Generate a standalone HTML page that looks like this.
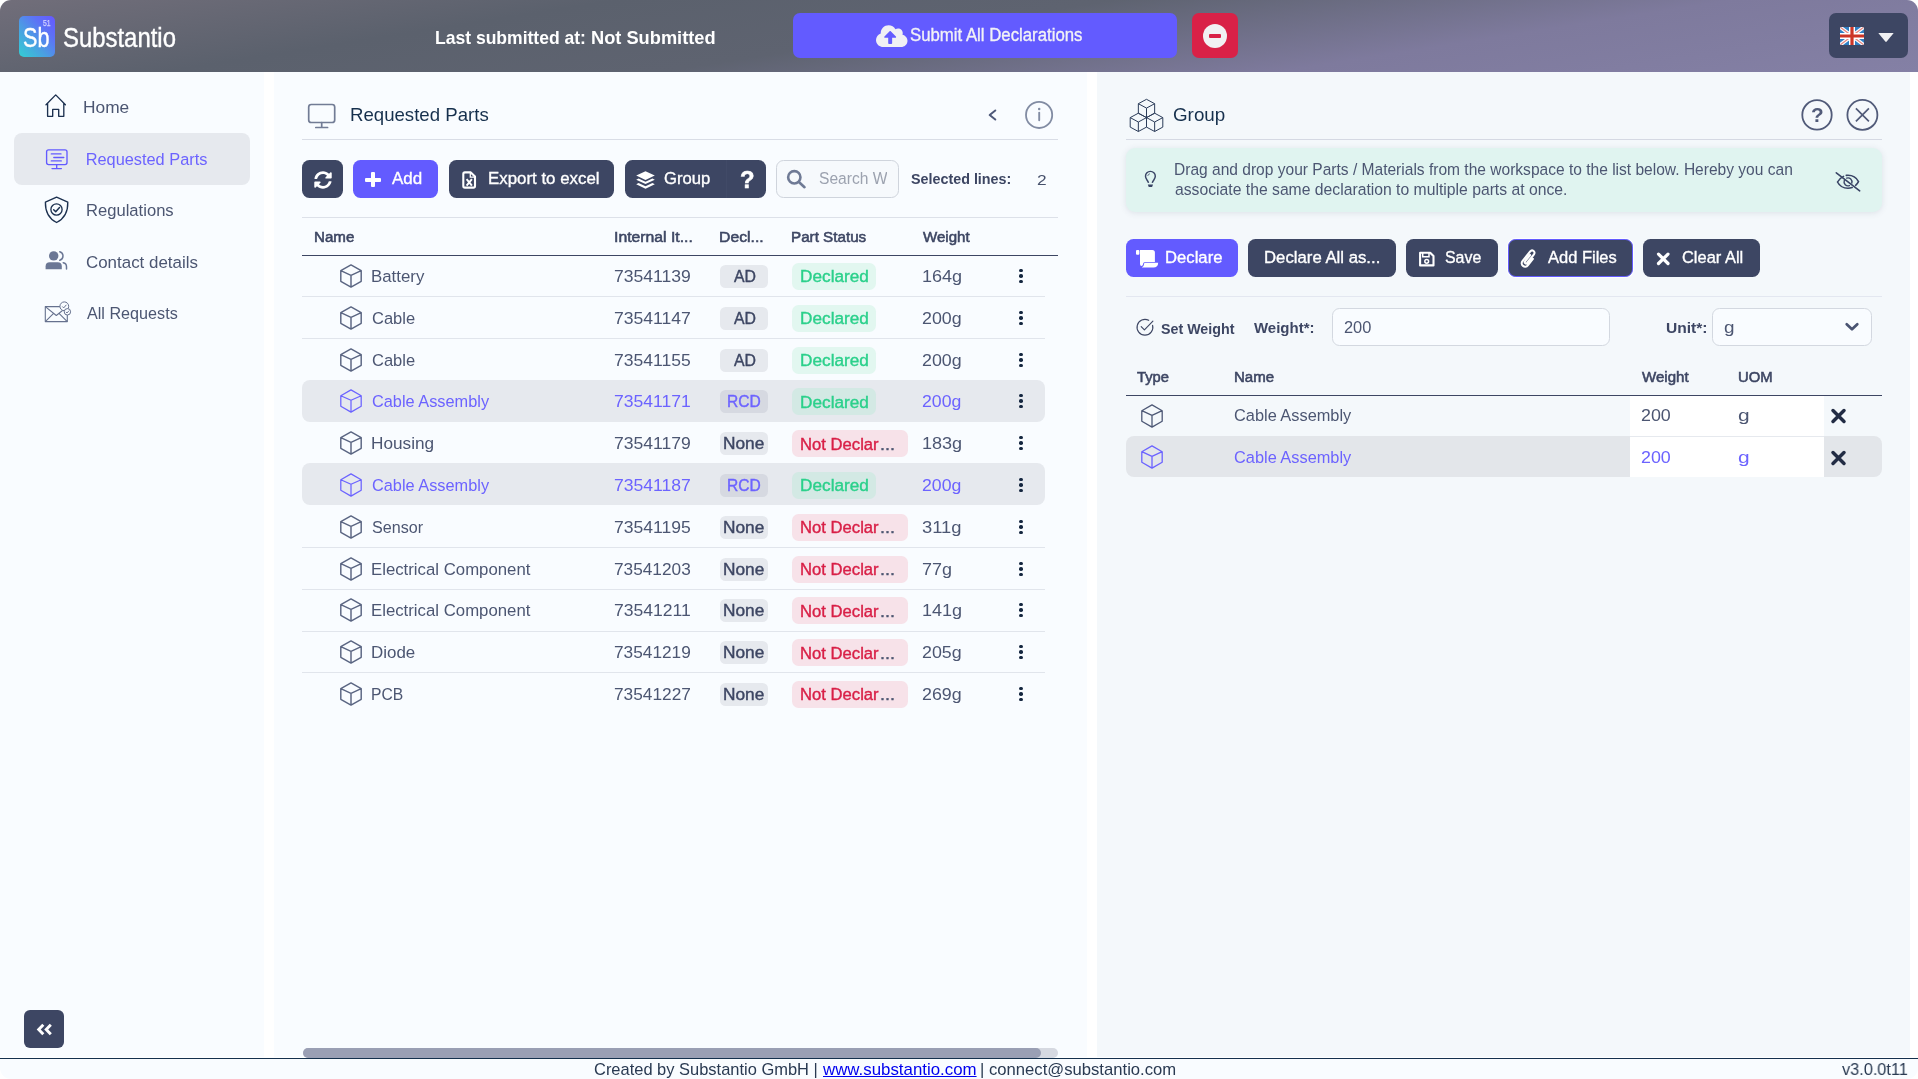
<!DOCTYPE html>
<html>
<head>
<meta charset="utf-8">
<title>Substantio</title>
<style>
*{box-sizing:border-box;margin:0;padding:0}
html,body{width:1918px;height:1079px;overflow:hidden;background:#fff;font-family:"Liberation Sans",sans-serif;}
#app{will-change:transform;position:absolute;left:0;top:0;width:1918px;height:1079px;overflow:hidden;border-radius:11px;background:#fff;}
.a{position:absolute}
.t{position:absolute;white-space:nowrap;line-height:1;transform-origin:0 0;}

</style>
</head>
<body>
<div id="app">
<div class="a" style="left:0;top:0;width:1918px;height:72px;background:linear-gradient(171deg,#716e7a 0%,#5b616d 26%,#5e6370 47%,#7e7a9d 73%,#8480a5 100%)"></div>
<div class="a" style="left:19px;top:16px;width:36px;height:41px;background:linear-gradient(48deg,#33cfd3 0%,#4aa0e2 38%,#5d72f6 70%,#6657ff 100%);border-radius:5px;"></div>
<span class="t" style="left:23.28px;top:22px;line-height:31px;font-size:27.5px;color:#fff;-webkit-text-stroke:0.4px #fff;transform:scaleX(0.7840);">Sb</span>
<span class="t" style="left:42.72px;top:18px;line-height:10px;font-size:8.8px;color:#d0d2ff;-webkit-text-stroke:0.25px #d0d2ff;transform:scaleX(0.7781);">51</span>
<span class="t" style="left:63.09px;top:22px;line-height:31px;font-size:27.5px;color:#fff;-webkit-text-stroke:0.4px #fff;transform:scaleX(0.8691);">Substantio</span>
<span class="t" style="left:435.03px;top:27px;line-height:21px;font-size:19px;color:#fff;font-weight:700;transform:scaleX(0.9226);">Last submitted at:</span>
<span class="t" style="left:590.58px;top:27px;line-height:21px;font-size:19px;color:#fff;font-weight:700;transform:scaleX(0.9600);">Not Submitted</span>
<div class="a" style="left:793px;top:13px;width:384px;height:44.6px;background:#635bff;border-radius:7px;"></div>
<svg class="a" style="left:876.3px;top:24.8px" width="31.5" height="22.4" viewBox="0 0 640 460" preserveAspectRatio="none"><path fill="#f0f0f4" d="M537.6 200.600c4.100-10.700 6.400-22.400 6.400-34.600 0-53-43-96-96-96-19.700 0-38.100 6-53.300 16.200C367 38.200 315.300 6 256 6 167.600 6 96 77.600 96 166c0 2.700.1 5.400.2 8.100C40.200 193.800 0 247.200 0 310c0 79.500 64.500 144 144 144h368c70.700 0 128-57.300 128-128 0-61.900-44-113.600-102.400-125.400z"/><path fill="#635bff" d="M393.400 262H328v112c0 8.800-7.200 16-16 16h-48c-8.800 0-16-7.200-16-16V262h-65.400c-14.300 0-21.400-17.200-11.300-27.300l105.400-105.400c6.200-6.200 16.400-6.200 22.600 0l105.400 105.400c10.100 10.100 2.900 27.300-11.300 27.300z"/></svg>
<span class="t" style="left:910.10px;top:24px;line-height:21px;font-size:18.3px;color:#f2f2f6;-webkit-text-stroke:0.35px #f2f2f6;transform:scaleX(0.9173);">Submit All Declarations</span>
<div class="a" style="left:1192px;top:13px;width:46px;height:44.6px;background:#d92147;border-radius:7px;"></div>
<div class="a" style="left:1203px;top:23.9px;width:24px;height:24px;background:#f1f1f3;border-radius:12px;"></div>
<div class="a" style="left:1208.6px;top:34.1px;width:12.8px;height:3.6px;background:#d92147;border-radius:1px;"></div>
<div class="a" style="left:1829px;top:13px;width:79px;height:44.6px;background:#3d4663;border-radius:7px;"></div>
<svg class="a" style="left:1840px;top:27px" width="24" height="18" viewBox="0 0 60 45" preserveAspectRatio="none"><clipPath id="fc"><rect width="60" height="45" rx="4"/></clipPath><g clip-path="url(#fc)"><rect width="60" height="45" fill="#2f7fc4"/><path d="M0 0L60 45M60 0L0 45" stroke="#fff" stroke-width="9"/><path d="M0 0L60 45M60 0L0 45" stroke="#e58a84" stroke-width="3.500"/><path d="M30 0V45M0 22.500H60" stroke="#fff" stroke-width="15"/><path d="M30 0V45M0 22.500H60" stroke="#cc3527" stroke-width="8"/></g></svg>
<svg class="a" style="left:1877.5px;top:32.5px" width="16" height="9" viewBox="0 0 16 9"><path fill="#f1f1f3" d="M0.300 0H15.700L8.700 8.600Q8 9.200 7.300 8.600Z"/></svg>
<div class="a" style="left:0px;top:72px;width:264px;height:985px;background:#f9fcff;border-radius:0px;"></div>
<div class="a" style="left:14px;top:133.2px;width:236px;height:51.5px;background:#e6e9ee;border-radius:8px;"></div>
<svg class="a" style="left:44px;top:93px;" width="24" height="25" viewBox="44 93 24 25"><path d="M46 104.700L55.700 94.900L65.400 104.700M47.600 103.300V116.300H52.700V109.300H58.700V116.300H63.800V103.300" fill="none" stroke="#1d3150" stroke-width="1.350" stroke-linejoin="round" stroke-linecap="round"/></svg>
<svg class="a" style="left:44px;top:148px;" width="26" height="23" viewBox="44 148 26 23"><g fill="none" stroke="#635bff" stroke-width="1.350" stroke-linecap="round"><rect x="46.600" y="149.800" width="20.400" height="14.800" rx="2"/><path d="M51.300 153.900H61M53.800 157.500H63.800M51.300 160.900H61.300M56.700 164.800V168.300M52 168.600H61.400"/></g></svg>
<svg class="a" style="left:43px;top:195px;" width="27" height="29" viewBox="43 195 27 29"><g fill="none" stroke="#1d3150" stroke-width="1.350" stroke-linejoin="round" stroke-linecap="round"><path d="M56.600 197.200L67.800 202.200C68 212 64.500 218.500 56.600 222.500C48.700 218.500 45.200 212 45.400 202.200Z"/><circle cx="56.500" cy="209.500" r="5.600"/><path d="M53.700 209.700L55.700 211.700L59.500 207.600" stroke-width="1.500"/></g></svg>
<svg class="a" style="left:44px;top:250px;" width="25" height="21" viewBox="44 250 25 21"><g fill="#6b7795"><circle cx="53.700" cy="255.900" r="4.700"/><path d="M45.600 269.300V266.300Q45.600 262.200 49.800 262.200H57.600Q61.800 262.200 61.800 266.300V269.300Z"/></g><g fill="none" stroke="#6b7795" stroke-width="1.500" stroke-linecap="round"><path d="M59.800 251.700A4.500 4.500 0 0 1 59.800 260.300"/><path d="M63.200 262.700Q66.500 263.300 66.500 266.800V269"/></g></svg>
<svg class="a" style="left:43px;top:300px;" width="30" height="24" viewBox="43 300 30 24"><g fill="none" stroke="#66718e" stroke-width="1.100" stroke-linejoin="round"><rect x="45.300" y="306.600" width="22" height="15"/><path d="M45.300 306.600L56.300 315.500L67.300 306.600M45.300 321.600L53.600 313.400M67.300 321.600L59 313.400"/></g><circle cx="64.300" cy="306.300" r="4.400" fill="#f9fcff" stroke="#66718e" stroke-width="1"/><path d="M62.300 306.500L63.700 307.900L66.400 304.800" fill="none" stroke="#66718e" stroke-width="1"/><circle cx="67.400" cy="311.800" r="3.200" fill="#f9fcff" stroke="#66718e" stroke-width="1"/><path d="M65.900 311.900L67 313L69 310.700" fill="none" stroke="#66718e" stroke-width=".9"/></svg>
<span class="t" style="left:83.18px;top:98px;line-height:18px;font-size:16.35px;color:#4c5672;transform:scaleX(1.0595);">Home</span>
<span class="t" style="left:85.66px;top:150px;line-height:18px;font-size:16.35px;color:#6c63ff;">Requested Parts</span>
<span class="t" style="left:85.64px;top:201px;line-height:18px;font-size:16.35px;color:#4c5672;transform:scaleX(1.0156);">Regulations</span>
<span class="t" style="left:86.04px;top:253px;line-height:18px;font-size:16.35px;color:#4c5672;transform:scaleX(1.0348);">Contact details</span>
<span class="t" style="left:86.57px;top:304px;line-height:18px;font-size:16.35px;color:#4c5672;transform:scaleX(0.9887);">All Requests</span>
<div class="a" style="left:24px;top:1010px;width:40px;height:37.8px;background:#3d4663;border-radius:6px;"></div>
<svg class="a" style="left:34px;top:1020px;" width="22" height="20" viewBox="34 1020 22 20"><path d="M43.300 1024.700L38.700 1029.500L43.300 1034.300M50.800 1024.700L46.200 1029.500L50.800 1034.300" fill="none" stroke="#fff" stroke-width="2.900" stroke-linejoin="miter"/></svg>
<div class="a" style="left:274px;top:72px;width:813px;height:985px;background:#f9fcff;border-radius:0px;"></div>
<svg class="a" style="left:306px;top:102px;" width="32" height="28" viewBox="306 102 32 28"><g fill="none" stroke="#727c95" stroke-width="1.700" stroke-linecap="round"><rect x="308.700" y="104.500" width="26" height="18" rx="2.600"/><path d="M321.700 122.700V127.200M315.800 127.500H327.600"/></g></svg>
<span class="t" style="left:349.77px;top:104px;line-height:21px;font-size:19px;color:#16304d;transform:scaleX(0.9800);">Requested Parts</span>
<svg class="a" style="left:986px;top:107px;" width="13" height="16" viewBox="986 107 13 16"><path d="M995.300 110.500L989.700 115L995.300 119.500" fill="none" stroke="#4e5979" stroke-width="2" stroke-linecap="round" stroke-linejoin="round"/></svg>
<svg class="a" style="left:1023px;top:99px;" width="32" height="32" viewBox="1023 99 32 32"><circle cx="1039.100" cy="114.900" r="13.100" fill="none" stroke="#828ca3" stroke-width="1.800"/><circle cx="1039.200" cy="109.100" r="1.250" fill="#828ca3"/><path d="M1039.200 112.800V120.300" stroke="#828ca3" stroke-width="1.900" stroke-linecap="round"/></svg>
<div class="a" style="left:302px;top:139px;width:756px;height:1px;background:#d9dde6;border-radius:0px;"></div>
<div class="a" style="left:302px;top:160px;width:41px;height:37.8px;background:#3d4663;border-radius:7.5px;"></div>
<svg class="a" style="left:314px;top:170.700px" width="18" height="18" viewBox="0 0 512 512"><path fill="#fff" d="M370.720 133.280C339.458 104.008 298.888 87.962 255.848 88c-77.458.068-144.328 53.178-162.791 126.850-1.344 5.363-6.122 9.150-11.651 9.150H24.103c-7.498 0-13.194-6.807-11.807-14.176C33.933 94.924 134.813 8 256 8c66.448 0 126.791 26.136 171.315 68.685L463.030 40.970C478.149 25.851 504 36.559 504 57.941V192c0 13.255-10.745 24-24 24H345.941c-21.382 0-32.090-25.851-16.971-40.971l41.750-41.749zM32 296h134.059c21.382 0 32.090 25.851 16.971 40.971l-41.750 41.750c31.262 29.273 71.835 45.319 114.876 45.280 77.418-.070 144.315-53.144 162.787-126.849 1.344-5.363 6.122-9.150 11.651-9.150h57.304c7.498 0 13.194 6.807 11.807 14.176C478.067 417.076 377.187 504 256 504c-66.448 0-126.791-26.136-171.315-68.685L48.970 471.030C33.851 486.149 8 475.441 8 454.059V320c0-13.255 10.745-24 24-24z"/></svg>
<div class="a" style="left:353px;top:160px;width:85px;height:37.8px;background:#635bff;border-radius:7.5px;"></div>
<div class="a" style="left:364.9px;top:177.5px;width:15.9px;height:4.1px;background:#fff;border-radius:1px;"></div>
<div class="a" style="left:370.8px;top:172.1px;width:4.1px;height:14.8px;background:#fff;border-radius:1px;"></div>
<span class="t" style="left:392.44px;top:168px;line-height:20px;font-size:17.2px;color:#fff;-webkit-text-stroke:0.35px #fff;transform:scaleX(0.9869);">Add</span>
<div class="a" style="left:449px;top:160px;width:165px;height:37.8px;background:#3d4663;border-radius:7.5px;"></div>
<svg class="a" style="left:461px;top:169.5px;" width="17" height="20" viewBox="461 169.5 17 20"><path d="M463.300 173.500Q463.300 171.900 464.900 171.900H470.800L475 176.100V185.500Q475 187.100 473.400 187.100H464.900Q463.300 187.100 463.300 185.500Z" fill="none" stroke="#fff" stroke-width="2.100" stroke-linejoin="round"/><path d="M470.300 171.900V176.600H475" fill="none" stroke="#fff" stroke-width="1.300"/><path d="M466.600 178.700L471.900 185.200M471.900 178.700L466.600 185.200" stroke="#fff" stroke-width="2" /></svg>
<span class="t" style="left:487.89px;top:168px;line-height:20px;font-size:17.2px;color:#fff;-webkit-text-stroke:0.35px #fff;transform:scaleX(0.9814);">Export to excel</span>
<div class="a" style="left:625px;top:160px;width:141px;height:37.8px;background:#3d4663;border-radius:7.5px;"></div>
<div class="a" style="left:726px;top:160px;width:1px;height:37.8px;background:#414a67;border-radius:0px;"></div>
<svg class="a" style="left:635px;top:169.5px;" width="22" height="20.5" viewBox="635 169.5 22 20.5"><g fill="#fff"><path d="M645.500 170.800L654.800 175.100L645.500 179.400L636.200 175.100Z"/><path d="M638.600 178L645.500 181.200L652.400 178L654.800 179.200L645.500 183.600L636.200 179.200Z"/><path d="M638.600 182.500L645.500 185.700L652.400 182.500L654.800 183.700L645.500 188.200L636.200 183.700Z"/></g></svg>
<span class="t" style="left:664.13px;top:168px;line-height:20px;font-size:17.2px;color:#fff;-webkit-text-stroke:0.35px #fff;transform:scaleX(0.9692);">Group</span>
<span class="t" style="left:739.55px;top:166px;line-height:27px;font-size:24.5px;color:#fff;font-weight:700;-webkit-text-stroke:0.5px #fff;transform:scaleX(0.9745);">?</span>
<div class="a" style="left:776.3px;top:160.3px;width:123.2px;height:37.3px;background:#f6f9fc;border-radius:7.5px;border:1px solid #cfd4dc;"></div>
<svg class="a" style="left:785px;top:168px;" width="23" height="22" viewBox="785 168 23 22"><circle cx="794.300" cy="177.300" r="6.150" fill="none" stroke="#6f7a95" stroke-width="2.600"/><path d="M798.900 182L804.500 187.200" stroke="#6f7a95" stroke-width="2.600" stroke-linecap="round"/></svg>
<div class="a" style="left:815px;top:165px;width:72px;height:28px;overflow:hidden">
<span class="t" style="left:4.09px;top:4px;line-height:18px;font-size:16.3px;color:#9ca2af;transform:scaleX(0.9578);">Search W</span>
</div>
<span class="t" style="left:911.49px;top:171px;line-height:16px;font-size:14.7px;color:#3d4663;font-weight:700;transform:scaleX(0.9751);">Selected lines:</span>
<span class="t" style="left:1037.23px;top:172px;line-height:16px;font-size:14.6px;color:#46506b;transform:scaleX(1.1884);">2</span>
<div class="a" style="left:302px;top:217px;width:756px;height:1px;background:#dde1e9;border-radius:0px;"></div>
<span class="t" style="left:314.04px;top:229px;line-height:16px;font-size:14.7px;color:#3d4663;-webkit-text-stroke:0.55px #3d4663;transform:scaleX(1.0299);">Name</span>
<span class="t" style="left:613.54px;top:229px;line-height:16px;font-size:14.7px;color:#3d4663;-webkit-text-stroke:0.55px #3d4663;transform:scaleX(1.0726);">Internal It...</span>
<span class="t" style="left:719.00px;top:229px;line-height:16px;font-size:14.7px;color:#3d4663;-webkit-text-stroke:0.55px #3d4663;transform:scaleX(1.0725);">Decl...</span>
<span class="t" style="left:791.44px;top:229px;line-height:16px;font-size:14.7px;color:#3d4663;-webkit-text-stroke:0.55px #3d4663;transform:scaleX(1.0354);">Part Status</span>
<span class="t" style="left:923.22px;top:229px;line-height:16px;font-size:14.7px;color:#3d4663;-webkit-text-stroke:0.55px #3d4663;transform:scaleX(1.0257);">Weight</span>
<div class="a" style="left:302px;top:254.5px;width:756px;height:1.5px;background:#3d4663;border-radius:0px;"></div>
<div class="a" style="left:302px;top:296px;width:743px;height:1px;background:#e1e5ec;border-radius:0px;"></div>
<svg class="a" style="left:338.5px;top:262.7px;" width="24" height="26" viewBox="338.5 262.7 24 26"><path d="M350.5 264.6L360.7 270.4V281L350.5 286.8L340.3 281V270.4ZM340.3 270.4L350.5 275L360.7 270.4M350.5 275V286.8" fill="none" stroke="#5a6582" stroke-width="1.45" stroke-linejoin="round"/></svg>
<span class="t" style="left:371.02px;top:267px;line-height:19px;font-size:17.05px;color:#4c5672;transform:scaleX(0.9881);">Battery</span>
<span class="t" style="left:614.00px;top:267px;line-height:19px;font-size:17.05px;color:#4c5672;transform:scaleX(1.0312);">73541139</span>
<div class="a" style="left:720px;top:265px;width:48px;height:22.7px;background:#e6e9ee;border-radius:5.5px;"></div>
<span class="t" style="left:733.56px;top:267px;line-height:18px;font-size:16.3px;color:#3d4663;-webkit-text-stroke:0.4px #3d4663;transform:scaleX(0.9727);">AD</span>
<div class="a" style="left:792.2px;top:262.9px;width:83.8px;height:27px;background:#e2f7f0;border-radius:6.5px;"></div>
<span class="t" style="left:799.89px;top:267px;line-height:19px;font-size:17.05px;color:#2bd08b;-webkit-text-stroke:0.4px #2bd08b;transform:scaleX(1.0112);">Declared</span>
<span class="t" style="left:921.72px;top:267px;line-height:19px;font-size:17.05px;color:#4c5672;transform:scaleX(1.0594);">164g</span>
<div class="a" style="left:1019.400px;top:268.5px;width:3.500px;height:3.500px;border-radius:50%;background:#14263f"></div>
<div class="a" style="left:1019.400px;top:274.05px;width:3.500px;height:3.500px;border-radius:50%;background:#14263f"></div>
<div class="a" style="left:1019.400px;top:279.6px;width:3.500px;height:3.500px;border-radius:50%;background:#14263f"></div>
<div class="a" style="left:302px;top:338px;width:743px;height:1px;background:#e1e5ec;border-radius:0px;"></div>
<svg class="a" style="left:338.5px;top:304.7px;" width="24" height="26" viewBox="338.5 304.7 24 26"><path d="M350.5 306.6L360.7 312.4V323L350.5 328.8L340.3 323V312.4ZM340.3 312.4L350.5 317L360.7 312.4M350.5 317V328.8" fill="none" stroke="#5a6582" stroke-width="1.45" stroke-linejoin="round"/></svg>
<span class="t" style="left:371.56px;top:309px;line-height:19px;font-size:17.05px;color:#4c5672;transform:scaleX(0.9702);">Cable</span>
<span class="t" style="left:614.00px;top:309px;line-height:19px;font-size:17.05px;color:#4c5672;transform:scaleX(1.0319);">73541147</span>
<div class="a" style="left:720px;top:307px;width:48px;height:22.7px;background:#e6e9ee;border-radius:5.5px;"></div>
<span class="t" style="left:733.56px;top:309px;line-height:18px;font-size:16.3px;color:#3d4663;-webkit-text-stroke:0.4px #3d4663;transform:scaleX(0.9727);">AD</span>
<div class="a" style="left:792.2px;top:304.9px;width:83.8px;height:27px;background:#e2f7f0;border-radius:6.5px;"></div>
<span class="t" style="left:799.89px;top:309px;line-height:19px;font-size:17.05px;color:#2bd08b;-webkit-text-stroke:0.4px #2bd08b;transform:scaleX(1.0112);">Declared</span>
<span class="t" style="left:922.20px;top:309px;line-height:19px;font-size:17.05px;color:#4c5672;transform:scaleX(1.0464);">200g</span>
<div class="a" style="left:1019.400px;top:310.5px;width:3.500px;height:3.500px;border-radius:50%;background:#14263f"></div>
<div class="a" style="left:1019.400px;top:316.05px;width:3.500px;height:3.500px;border-radius:50%;background:#14263f"></div>
<div class="a" style="left:1019.400px;top:321.6px;width:3.500px;height:3.500px;border-radius:50%;background:#14263f"></div>
<svg class="a" style="left:338.5px;top:346.7px;" width="24" height="26" viewBox="338.5 346.7 24 26"><path d="M350.5 348.6L360.7 354.4V365L350.5 370.8L340.3 365V354.4ZM340.3 354.4L350.5 359L360.7 354.4M350.5 359V370.8" fill="none" stroke="#5a6582" stroke-width="1.45" stroke-linejoin="round"/></svg>
<span class="t" style="left:371.56px;top:351px;line-height:19px;font-size:17.05px;color:#4c5672;transform:scaleX(0.9702);">Cable</span>
<span class="t" style="left:614.00px;top:351px;line-height:19px;font-size:17.05px;color:#4c5672;transform:scaleX(1.0299);">73541155</span>
<div class="a" style="left:720px;top:349px;width:48px;height:22.7px;background:#e6e9ee;border-radius:5.5px;"></div>
<span class="t" style="left:733.56px;top:351px;line-height:18px;font-size:16.3px;color:#3d4663;-webkit-text-stroke:0.4px #3d4663;transform:scaleX(0.9727);">AD</span>
<div class="a" style="left:792.2px;top:346.9px;width:83.8px;height:27px;background:#e2f7f0;border-radius:6.5px;"></div>
<span class="t" style="left:799.89px;top:351px;line-height:19px;font-size:17.05px;color:#2bd08b;-webkit-text-stroke:0.4px #2bd08b;transform:scaleX(1.0112);">Declared</span>
<span class="t" style="left:922.20px;top:351px;line-height:19px;font-size:17.05px;color:#4c5672;transform:scaleX(1.0464);">200g</span>
<div class="a" style="left:1019.400px;top:352.5px;width:3.500px;height:3.500px;border-radius:50%;background:#14263f"></div>
<div class="a" style="left:1019.400px;top:358.05px;width:3.500px;height:3.500px;border-radius:50%;background:#14263f"></div>
<div class="a" style="left:1019.400px;top:363.6px;width:3.500px;height:3.500px;border-radius:50%;background:#14263f"></div>
<div class="a" style="left:302px;top:380px;width:743px;height:41.7px;background:#e6e9ee;border-radius:8px;"></div>
<svg class="a" style="left:338.5px;top:387.7px;" width="24" height="26" viewBox="338.5 387.7 24 26"><path d="M350.5 389.6L360.7 395.4V406L350.5 411.8L340.3 406V395.4ZM340.3 395.4L350.5 400L360.7 395.4M350.5 400V411.8" fill="none" stroke="#6b63ff" stroke-width="1.25" stroke-linejoin="round"/></svg>
<span class="t" style="left:371.57px;top:392px;line-height:19px;font-size:17.05px;color:#6c63ff;transform:scaleX(0.9586);">Cable Assembly</span>
<span class="t" style="left:614.00px;top:392px;line-height:19px;font-size:17.05px;color:#6c63ff;transform:scaleX(1.0315);">73541171</span>
<div class="a" style="left:720px;top:390px;width:48px;height:22.7px;background:#d6d9e1;border-radius:5.5px;"></div>
<span class="t" style="left:727.01px;top:392px;line-height:18px;font-size:16.3px;color:#6c63ff;-webkit-text-stroke:0.4px #6c63ff;transform:scaleX(0.9566);">RCD</span>
<div class="a" style="left:792.2px;top:387.9px;width:83.8px;height:27px;background:#d3e9e4;border-radius:6.5px;"></div>
<span class="t" style="left:799.89px;top:393px;line-height:19px;font-size:17.05px;color:#2bd08b;-webkit-text-stroke:0.4px #2bd08b;transform:scaleX(1.0112);">Declared</span>
<span class="t" style="left:922.21px;top:392px;line-height:19px;font-size:17.05px;color:#6c63ff;transform:scaleX(1.0381);">200g</span>
<div class="a" style="left:1019.400px;top:393.5px;width:3.500px;height:3.500px;border-radius:50%;background:#14263f"></div>
<div class="a" style="left:1019.400px;top:399.05px;width:3.500px;height:3.500px;border-radius:50%;background:#14263f"></div>
<div class="a" style="left:1019.400px;top:404.6px;width:3.500px;height:3.500px;border-radius:50%;background:#14263f"></div>
<svg class="a" style="left:338.5px;top:429.7px;" width="24" height="26" viewBox="338.5 429.7 24 26"><path d="M350.5 431.6L360.7 437.4V448L350.5 453.8L340.3 448V437.4ZM340.3 437.4L350.5 442L360.7 437.4M350.5 442V453.8" fill="none" stroke="#5a6582" stroke-width="1.45" stroke-linejoin="round"/></svg>
<span class="t" style="left:370.99px;top:434px;line-height:19px;font-size:17.05px;color:#4c5672;transform:scaleX(1.0102);">Housing</span>
<span class="t" style="left:614.00px;top:434px;line-height:19px;font-size:17.05px;color:#4c5672;transform:scaleX(1.0312);">73541179</span>
<div class="a" style="left:720px;top:432px;width:48px;height:22.7px;background:#e6e9ee;border-radius:5.5px;"></div>
<span class="t" style="left:723.19px;top:434px;line-height:18px;font-size:16.3px;color:#3d4663;-webkit-text-stroke:0.4px #3d4663;transform:scaleX(1.0601);">None</span>
<div class="a" style="left:792px;top:429.9px;width:115.8px;height:27px;background:#f7e2e9;border-radius:6.5px;"></div>
<span class="t" style="left:799.83px;top:435px;line-height:19px;font-size:17.05px;color:#d81f46;-webkit-text-stroke:0.4px #d81f46;transform:scaleX(0.9777);">Not Declar</span>
<span class="t" style="left:879.77px;top:435px;line-height:19px;font-size:17.05px;color:#4b5570;-webkit-text-stroke:0.4px #4b5570;transform:scaleX(1.0538);">...</span>
<span class="t" style="left:921.72px;top:434px;line-height:19px;font-size:17.05px;color:#4c5672;transform:scaleX(1.0594);">183g</span>
<div class="a" style="left:1019.400px;top:435.5px;width:3.500px;height:3.500px;border-radius:50%;background:#14263f"></div>
<div class="a" style="left:1019.400px;top:441.05px;width:3.500px;height:3.500px;border-radius:50%;background:#14263f"></div>
<div class="a" style="left:1019.400px;top:446.6px;width:3.500px;height:3.500px;border-radius:50%;background:#14263f"></div>
<div class="a" style="left:302px;top:463px;width:743px;height:41.7px;background:#e6e9ee;border-radius:8px;"></div>
<svg class="a" style="left:338.5px;top:471.7px;" width="24" height="26" viewBox="338.5 471.7 24 26"><path d="M350.5 473.6L360.7 479.4V490L350.5 495.8L340.3 490V479.4ZM340.3 479.4L350.5 484L360.7 479.4M350.5 484V495.8" fill="none" stroke="#6b63ff" stroke-width="1.25" stroke-linejoin="round"/></svg>
<span class="t" style="left:371.57px;top:476px;line-height:19px;font-size:17.05px;color:#6c63ff;transform:scaleX(0.9586);">Cable Assembly</span>
<span class="t" style="left:614.00px;top:476px;line-height:19px;font-size:17.05px;color:#6c63ff;transform:scaleX(1.0319);">73541187</span>
<div class="a" style="left:720px;top:474px;width:48px;height:22.7px;background:#d6d9e1;border-radius:5.5px;"></div>
<span class="t" style="left:727.01px;top:476px;line-height:18px;font-size:16.3px;color:#6c63ff;-webkit-text-stroke:0.4px #6c63ff;transform:scaleX(0.9566);">RCD</span>
<div class="a" style="left:792.2px;top:471.9px;width:83.8px;height:27px;background:#d3e9e4;border-radius:6.5px;"></div>
<span class="t" style="left:799.89px;top:476px;line-height:19px;font-size:17.05px;color:#2bd08b;-webkit-text-stroke:0.4px #2bd08b;transform:scaleX(1.0112);">Declared</span>
<span class="t" style="left:922.21px;top:476px;line-height:19px;font-size:17.05px;color:#6c63ff;transform:scaleX(1.0381);">200g</span>
<div class="a" style="left:1019.400px;top:477.5px;width:3.500px;height:3.500px;border-radius:50%;background:#14263f"></div>
<div class="a" style="left:1019.400px;top:483.05px;width:3.500px;height:3.500px;border-radius:50%;background:#14263f"></div>
<div class="a" style="left:1019.400px;top:488.6px;width:3.500px;height:3.500px;border-radius:50%;background:#14263f"></div>
<div class="a" style="left:302px;top:547px;width:743px;height:1px;background:#e1e5ec;border-radius:0px;"></div>
<svg class="a" style="left:338.5px;top:513.7px;" width="24" height="26" viewBox="338.5 513.7 24 26"><path d="M350.5 515.6L360.7 521.4V532L350.5 537.8L340.3 532V521.4ZM340.3 521.4L350.5 526L360.7 521.4M350.5 526V537.8" fill="none" stroke="#5a6582" stroke-width="1.45" stroke-linejoin="round"/></svg>
<span class="t" style="left:371.67px;top:518px;line-height:19px;font-size:17.05px;color:#4c5672;transform:scaleX(0.9470);">Sensor</span>
<span class="t" style="left:614.00px;top:518px;line-height:19px;font-size:17.05px;color:#4c5672;transform:scaleX(1.0299);">73541195</span>
<div class="a" style="left:720px;top:516px;width:48px;height:22.7px;background:#e6e9ee;border-radius:5.5px;"></div>
<span class="t" style="left:723.19px;top:518px;line-height:18px;font-size:16.3px;color:#3d4663;-webkit-text-stroke:0.4px #3d4663;transform:scaleX(1.0601);">None</span>
<div class="a" style="left:792px;top:513.9px;width:115.8px;height:27px;background:#f7e2e9;border-radius:6.5px;"></div>
<span class="t" style="left:799.83px;top:518px;line-height:19px;font-size:17.05px;color:#d81f46;-webkit-text-stroke:0.4px #d81f46;transform:scaleX(0.9777);">Not Declar</span>
<span class="t" style="left:879.77px;top:518px;line-height:19px;font-size:17.05px;color:#4b5570;-webkit-text-stroke:0.4px #4b5570;transform:scaleX(1.0538);">...</span>
<span class="t" style="left:922.40px;top:518px;line-height:19px;font-size:17.05px;color:#4c5672;transform:scaleX(1.0781);">311g</span>
<div class="a" style="left:1019.400px;top:519.5px;width:3.500px;height:3.500px;border-radius:50%;background:#14263f"></div>
<div class="a" style="left:1019.400px;top:525.05px;width:3.500px;height:3.500px;border-radius:50%;background:#14263f"></div>
<div class="a" style="left:1019.400px;top:530.6px;width:3.500px;height:3.500px;border-radius:50%;background:#14263f"></div>
<div class="a" style="left:302px;top:589px;width:743px;height:1px;background:#e1e5ec;border-radius:0px;"></div>
<svg class="a" style="left:338.5px;top:555.7px;" width="24" height="26" viewBox="338.5 555.7 24 26"><path d="M350.5 557.6L360.7 563.4V574L350.5 579.8L340.3 574V563.4ZM340.3 563.4L350.5 568L360.7 563.4M350.5 568V579.8" fill="none" stroke="#5a6582" stroke-width="1.45" stroke-linejoin="round"/></svg>
<span class="t" style="left:371.02px;top:560px;line-height:19px;font-size:17.05px;color:#4c5672;transform:scaleX(0.9847);">Electrical Component</span>
<span class="t" style="left:614.01px;top:560px;line-height:19px;font-size:17.05px;color:#4c5672;transform:scaleX(1.0128);">73541203</span>
<div class="a" style="left:720px;top:558px;width:48px;height:22.7px;background:#e6e9ee;border-radius:5.5px;"></div>
<span class="t" style="left:723.19px;top:560px;line-height:18px;font-size:16.3px;color:#3d4663;-webkit-text-stroke:0.4px #3d4663;transform:scaleX(1.0601);">None</span>
<div class="a" style="left:792px;top:555.9px;width:115.8px;height:27px;background:#f7e2e9;border-radius:6.5px;"></div>
<span class="t" style="left:799.83px;top:560px;line-height:19px;font-size:17.05px;color:#d81f46;-webkit-text-stroke:0.4px #d81f46;transform:scaleX(0.9777);">Not Declar</span>
<span class="t" style="left:879.77px;top:560px;line-height:19px;font-size:17.05px;color:#4b5570;-webkit-text-stroke:0.4px #4b5570;transform:scaleX(1.0538);">...</span>
<span class="t" style="left:922.18px;top:560px;line-height:19px;font-size:17.05px;color:#4c5672;transform:scaleX(1.0551);">77g</span>
<div class="a" style="left:1019.400px;top:561.5px;width:3.500px;height:3.500px;border-radius:50%;background:#14263f"></div>
<div class="a" style="left:1019.400px;top:567.05px;width:3.500px;height:3.500px;border-radius:50%;background:#14263f"></div>
<div class="a" style="left:1019.400px;top:572.6px;width:3.500px;height:3.500px;border-radius:50%;background:#14263f"></div>
<div class="a" style="left:302px;top:631px;width:743px;height:1px;background:#e1e5ec;border-radius:0px;"></div>
<svg class="a" style="left:338.5px;top:596.7px;" width="24" height="26" viewBox="338.5 596.7 24 26"><path d="M350.5 598.6L360.7 604.4V615L350.5 620.8L340.3 615V604.4ZM340.3 604.4L350.5 609L360.7 604.4M350.5 609V620.8" fill="none" stroke="#5a6582" stroke-width="1.45" stroke-linejoin="round"/></svg>
<span class="t" style="left:371.02px;top:601px;line-height:19px;font-size:17.05px;color:#4c5672;transform:scaleX(0.9847);">Electrical Component</span>
<span class="t" style="left:614.00px;top:601px;line-height:19px;font-size:17.05px;color:#4c5672;transform:scaleX(1.0315);">73541211</span>
<div class="a" style="left:720px;top:599px;width:48px;height:22.7px;background:#e6e9ee;border-radius:5.5px;"></div>
<span class="t" style="left:723.19px;top:601px;line-height:18px;font-size:16.3px;color:#3d4663;-webkit-text-stroke:0.4px #3d4663;transform:scaleX(1.0601);">None</span>
<div class="a" style="left:792px;top:596.9px;width:115.8px;height:27px;background:#f7e2e9;border-radius:6.5px;"></div>
<span class="t" style="left:799.83px;top:602px;line-height:19px;font-size:17.05px;color:#d81f46;-webkit-text-stroke:0.4px #d81f46;transform:scaleX(0.9777);">Not Declar</span>
<span class="t" style="left:879.77px;top:602px;line-height:19px;font-size:17.05px;color:#4b5570;-webkit-text-stroke:0.4px #4b5570;transform:scaleX(1.0538);">...</span>
<span class="t" style="left:921.72px;top:601px;line-height:19px;font-size:17.05px;color:#4c5672;transform:scaleX(1.0594);">141g</span>
<div class="a" style="left:1019.400px;top:602.5px;width:3.500px;height:3.500px;border-radius:50%;background:#14263f"></div>
<div class="a" style="left:1019.400px;top:608.05px;width:3.500px;height:3.500px;border-radius:50%;background:#14263f"></div>
<div class="a" style="left:1019.400px;top:613.6px;width:3.500px;height:3.500px;border-radius:50%;background:#14263f"></div>
<div class="a" style="left:302px;top:672px;width:743px;height:1px;background:#e1e5ec;border-radius:0px;"></div>
<svg class="a" style="left:338.5px;top:638.7px;" width="24" height="26" viewBox="338.5 638.7 24 26"><path d="M350.5 640.6L360.7 646.4V657L350.5 662.8L340.3 657V646.4ZM340.3 646.4L350.5 651L360.7 646.4M350.5 651V662.8" fill="none" stroke="#5a6582" stroke-width="1.45" stroke-linejoin="round"/></svg>
<span class="t" style="left:371.01px;top:643px;line-height:19px;font-size:17.05px;color:#4c5672;transform:scaleX(0.9943);">Diode</span>
<span class="t" style="left:614.01px;top:643px;line-height:19px;font-size:17.05px;color:#4c5672;transform:scaleX(1.0136);">73541219</span>
<div class="a" style="left:720px;top:641px;width:48px;height:22.7px;background:#e6e9ee;border-radius:5.5px;"></div>
<span class="t" style="left:723.19px;top:643px;line-height:18px;font-size:16.3px;color:#3d4663;-webkit-text-stroke:0.4px #3d4663;transform:scaleX(1.0601);">None</span>
<div class="a" style="left:792px;top:638.9px;width:115.8px;height:27px;background:#f7e2e9;border-radius:6.5px;"></div>
<span class="t" style="left:799.83px;top:644px;line-height:19px;font-size:17.05px;color:#d81f46;-webkit-text-stroke:0.4px #d81f46;transform:scaleX(0.9777);">Not Declar</span>
<span class="t" style="left:879.77px;top:644px;line-height:19px;font-size:17.05px;color:#4b5570;-webkit-text-stroke:0.4px #4b5570;transform:scaleX(1.0538);">...</span>
<span class="t" style="left:922.20px;top:643px;line-height:19px;font-size:17.05px;color:#4c5672;transform:scaleX(1.0464);">205g</span>
<div class="a" style="left:1019.400px;top:644.5px;width:3.500px;height:3.500px;border-radius:50%;background:#14263f"></div>
<div class="a" style="left:1019.400px;top:650.05px;width:3.500px;height:3.500px;border-radius:50%;background:#14263f"></div>
<div class="a" style="left:1019.400px;top:655.6px;width:3.500px;height:3.500px;border-radius:50%;background:#14263f"></div>
<svg class="a" style="left:338.5px;top:680.7px;" width="24" height="26" viewBox="338.5 680.7 24 26"><path d="M350.5 682.6L360.7 688.4V699L350.5 704.8L340.3 699V688.4ZM340.3 688.4L350.5 693L360.7 688.4M350.5 693V704.8" fill="none" stroke="#5a6582" stroke-width="1.45" stroke-linejoin="round"/></svg>
<span class="t" style="left:371.11px;top:685px;line-height:19px;font-size:17.05px;color:#4c5672;transform:scaleX(0.9199);">PCB</span>
<span class="t" style="left:614.01px;top:685px;line-height:19px;font-size:17.05px;color:#4c5672;transform:scaleX(1.0143);">73541227</span>
<div class="a" style="left:720px;top:683px;width:48px;height:22.7px;background:#e6e9ee;border-radius:5.5px;"></div>
<span class="t" style="left:723.19px;top:685px;line-height:18px;font-size:16.3px;color:#3d4663;-webkit-text-stroke:0.4px #3d4663;transform:scaleX(1.0601);">None</span>
<div class="a" style="left:792px;top:680.9px;width:115.8px;height:27px;background:#f7e2e9;border-radius:6.5px;"></div>
<span class="t" style="left:799.83px;top:685px;line-height:19px;font-size:17.05px;color:#d81f46;-webkit-text-stroke:0.4px #d81f46;transform:scaleX(0.9777);">Not Declar</span>
<span class="t" style="left:879.77px;top:685px;line-height:19px;font-size:17.05px;color:#4b5570;-webkit-text-stroke:0.4px #4b5570;transform:scaleX(1.0538);">...</span>
<span class="t" style="left:922.20px;top:685px;line-height:19px;font-size:17.05px;color:#4c5672;transform:scaleX(1.0464);">269g</span>
<div class="a" style="left:1019.400px;top:686.5px;width:3.500px;height:3.500px;border-radius:50%;background:#14263f"></div>
<div class="a" style="left:1019.400px;top:692.05px;width:3.500px;height:3.500px;border-radius:50%;background:#14263f"></div>
<div class="a" style="left:1019.400px;top:697.6px;width:3.500px;height:3.500px;border-radius:50%;background:#14263f"></div>
<div class="a" style="left:302.5px;top:1048px;width:755.3px;height:10px;background:#d6d9e1;border-radius:5px;"></div>
<div class="a" style="left:302.5px;top:1048px;width:738.1px;height:10px;background:#9a9fb4;border-radius:5px;"></div>
<div class="a" style="left:1097px;top:72px;width:813px;height:985px;background:#f4f8fb;border-radius:0px;"></div>
<svg class="a" style="left:1127px;top:96px;" width="40" height="39" viewBox="1127 96 40 39"><path d="M1146.5 99.3L1154.65 103.7V113.2L1146.5 117.6L1138.35 113.2V103.7ZM1138.35 103.7L1146.5 108.1L1154.65 103.7M1146.5 108.1V117.6M1138.35 113.2L1146.5 117.6V127.1L1138.35 131.5L1130.2 127.1V117.6ZM1130.2 117.6L1138.35 122L1146.5 117.6M1138.35 122V131.5M1154.65 113.2L1162.8 117.6V127.1L1154.65 131.5L1146.5 127.1V117.6ZM1146.5 117.6L1154.65 122L1162.8 117.6M1154.65 122V131.5" fill="none" stroke="#2b3c59" stroke-width="1" stroke-linejoin="round"/></svg>
<span class="t" style="left:1173.25px;top:104px;line-height:21px;font-size:19px;color:#16304d;transform:scaleX(0.9892);">Group</span>
<svg class="a" style="left:1799px;top:97px;" width="36" height="36" viewBox="1799 97 36 36"><circle cx="1817" cy="114.900" r="14.700" fill="none" stroke="#515b79" stroke-width="1.800"/></svg>
<span class="t" style="left:1811.05px;top:104px;line-height:22px;font-size:20px;color:#515b79;font-weight:700;transform:scaleX(1.0348);">?</span>
<svg class="a" style="left:1844px;top:97px;" width="37" height="36" viewBox="1844 97 37 36"><circle cx="1862.400" cy="114.900" r="15" fill="none" stroke="#515b79" stroke-width="1.800"/><path d="M1855.900 108.400L1868.900 121.400M1868.900 108.400L1855.900 121.400" stroke="#515b79" stroke-width="1.700"/></svg>
<div class="a" style="left:1126px;top:139px;width:756px;height:1px;background:#d5d9e3;border-radius:0px;"></div>
<div class="a" style="left:1126px;top:147.7px;width:756.4px;height:63.9px;background:#e0f4f0;border-radius:9px;box-shadow:0 1px 6px rgba(60,80,100,.13);"></div>
<svg class="a" style="left:1143px;top:169px;" width="15" height="20" viewBox="1143 169 15 20"><path d="M1148.500 182.900C1148 180.600 1145.500 179.200 1145.500 176.300A4.900 4.900 0 0 1 1155.300 176.300C1155.300 179.200 1152.800 180.600 1152.300 182.900" fill="none" stroke="#394465" stroke-width="1.450" stroke-linejoin="round"/><path d="M1147.800 184.400H1153L1152.300 186.400Q1152 187 1151.300 187H1149.500Q1148.800 187 1148.500 186.400Z" fill="#394465"/><path d="M1147.700 176A2.800 2.800 0 0 1 1150 173.700" fill="none" stroke="#394465" stroke-width=".7"/></svg>
<span class="t" style="left:1174.02px;top:160px;line-height:18px;font-size:16.3px;color:#4c5672;transform:scaleX(0.9550);">Drag and drop your Parts / Materials from the workspace to the list below. Hereby you can</span>
<span class="t" style="left:1174.63px;top:180px;line-height:18px;font-size:16.3px;color:#4c5672;transform:scaleX(0.9657);">associate the same declaration to multiple parts at once.</span>
<svg class="a" style="left:1834px;top:170px;" width="28" height="23" viewBox="1834 170 28 23"><g fill="none" stroke="#394465" stroke-width="1.600" stroke-linecap="round"><path d="M1836.300 172.800L1859.700 190.800"/><path d="M1843.500 176.400C1840.800 177.700 1838.700 179.700 1837.500 182C1839.500 185.800 1843.400 188.300 1848 188.300C1849.500 188.300 1850.900 188 1852.200 187.600"/><path d="M1846.300 175.400C1846.900 175.300 1847.400 175.300 1848 175.300C1852.600 175.300 1856.500 177.800 1858.500 181.600C1857.800 183 1856.800 184.200 1855.600 185.300"/><path d="M1844.300 180.500A4 4 0 0 0 1849.500 185.600M1851.800 183A4 4 0 0 0 1846.700 178.100" stroke-width="1.400"/></g></svg>
<div class="a" style="left:1126px;top:238.9px;width:112px;height:38px;background:#635bff;border-radius:7.5px;"></div>
<svg class="a" style="left:1135px;top:249px;" width="25" height="20" viewBox="1135 249 25 20"><g fill="#fff"><rect x="1136" y="250.100" width="3.400" height="4.700" rx="1"/><path d="M1140 250.100H1152.400Q1154.900 250.100 1154.900 252.600V261.900H1145Q1143.400 261.900 1143.200 263.600Q1143 266 1141.600 266Q1140 266 1140 264Z"/><path d="M1144.400 262.800H1158.200Q1158 267.600 1153.500 267.600H1141.800Q1144 266.600 1144.400 262.800Z"/></g></svg>
<span class="t" style="left:1164.50px;top:248px;line-height:19px;font-size:17.1px;color:#fff;-webkit-text-stroke:0.35px #fff;transform:scaleX(0.9757);">Declare</span>
<div class="a" style="left:1248px;top:238.9px;width:147.7px;height:38px;background:#3d4663;border-radius:7.5px;"></div>
<span class="t" style="left:1263.50px;top:248px;line-height:19px;font-size:17.1px;color:#fff;-webkit-text-stroke:0.35px #fff;transform:scaleX(0.9796);">Declare All as...</span>
<div class="a" style="left:1406px;top:238.9px;width:91.9px;height:38px;background:#3d4663;border-radius:7.5px;"></div>
<svg class="a" style="left:1417px;top:249.5px;" width="20" height="18.5" viewBox="1417 249.5 20 18.5"><path d="M1420.100 252.300H1430.200L1433.500 255.600V264.900H1420.100Z" fill="none" stroke="#fff" stroke-width="2.100" stroke-linejoin="round"/><path d="M1422.700 252.300V256.300H1429V252.300" fill="none" stroke="#fff" stroke-width="1.500"/><circle cx="1426.700" cy="260.800" r="1.900" fill="none" stroke="#fff" stroke-width="1.500"/></svg>
<span class="t" style="left:1445.44px;top:248px;line-height:19px;font-size:17.1px;color:#fff;-webkit-text-stroke:0.35px #fff;transform:scaleX(0.9318);">Save</span>
<div class="a" style="left:1508px;top:238.9px;width:124.8px;height:38px;background:#3d4663;border-radius:7.5px;border:1.300px solid #635bff;box-shadow:0 0 0 1px #fdfeff;"></div>
<svg class="a" style="left:1517px;top:246px;" width="24" height="25" viewBox="1517 246 24 25"><g transform="translate(1528.850 258.550) rotate(38.400)"><path d="M3.400 -2.200V6A3.400 3.400 0 0 1 -3.400 6V-6.500A2.400 2.400 0 0 1 1.400 -6.500V4.600A1.300 1.300 0 0 1 -1.200 4.600V-3.600" fill="none" stroke="#fff" stroke-width="2.100" stroke-linecap="round"/></g></svg>
<span class="t" style="left:1547.84px;top:248px;line-height:19px;font-size:17.1px;color:#fff;-webkit-text-stroke:0.35px #fff;transform:scaleX(0.9654);">Add Files</span>
<div class="a" style="left:1643px;top:238.9px;width:117px;height:38px;background:#3d4663;border-radius:7.5px;"></div>
<svg class="a" style="left:1655px;top:251px;" width="17" height="16" viewBox="1655 251 17 16"><path d="M1658.500 254.100L1668 263.500M1668 254.100L1658.500 263.500" stroke="#fff" stroke-width="3.200" stroke-linecap="round"/></svg>
<span class="t" style="left:1682.13px;top:248px;line-height:19px;font-size:17.1px;color:#fff;-webkit-text-stroke:0.35px #fff;transform:scaleX(0.9614);">Clear All</span>
<div class="a" style="left:1126px;top:296px;width:756px;height:1px;background:#e3e7f0;border-radius:0px;"></div>
<svg class="a" style="left:1134px;top:317px;" width="22" height="21" viewBox="1134 317 22 21"><g fill="none" stroke="#3d4663" stroke-width="1.150" stroke-linecap="round" stroke-linejoin="round"><path d="M1152.600 325.300A7.900 7.900 0 1 1 1148.700 320.300"/><path d="M1141.200 326.600L1144.400 329.800L1152.900 321.200"/></g></svg>
<span class="t" style="left:1161.29px;top:321px;line-height:16px;font-size:14.7px;color:#3d4663;font-weight:700;transform:scaleX(0.9705);">Set Weight</span>
<span class="t" style="left:1254.29px;top:320px;line-height:16px;font-size:14.7px;color:#3d4663;font-weight:700;transform:scaleX(1.0197);">Weight*:</span>
<div class="a" style="left:1332px;top:308px;width:278px;height:38px;background:#f9fcff;border-radius:7.5px;border:1px solid #d3d8e0;"></div>
<span class="t" style="left:1344.37px;top:318px;line-height:18px;font-size:16.3px;color:#4c5672;transform:scaleX(1.0075);">200</span>
<span class="t" style="left:1665.76px;top:320px;line-height:16px;font-size:14.7px;color:#3d4663;font-weight:700;transform:scaleX(1.0608);">Unit*:</span>
<div class="a" style="left:1712px;top:308px;width:160px;height:38px;background:#f9fcff;border-radius:7.5px;border:1px solid #d3d8e0;"></div>
<span class="t" style="left:1724.21px;top:318px;line-height:18px;font-size:16.3px;color:#4c5672;transform:scaleX(1.1612);">g</span>
<svg class="a" style="left:1843px;top:321px;" width="18" height="12" viewBox="1843 321 18 12"><path d="M1846.700 324.200L1852 329.300L1857.300 324.200" fill="none" stroke="#4a5472" stroke-width="2.700" stroke-linecap="round" stroke-linejoin="round"/></svg>
<span class="t" style="left:1137.44px;top:369px;line-height:16px;font-size:14.7px;color:#3d4663;-webkit-text-stroke:0.55px #3d4663;transform:scaleX(1.0061);">Type</span>
<span class="t" style="left:1234.25px;top:369px;line-height:16px;font-size:14.7px;color:#3d4663;-webkit-text-stroke:0.55px #3d4663;transform:scaleX(1.0246);">Name</span>
<span class="t" style="left:1641.82px;top:369px;line-height:16px;font-size:14.7px;color:#3d4663;-webkit-text-stroke:0.55px #3d4663;transform:scaleX(1.0257);">Weight</span>
<span class="t" style="left:1738.03px;top:369px;line-height:16px;font-size:14.7px;color:#3d4663;-webkit-text-stroke:0.55px #3d4663;transform:scaleX(1.0100);">UOM</span>
<div class="a" style="left:1126px;top:394.5px;width:756px;height:1.5px;background:#3d4663;border-radius:0px;"></div>
<div class="a" style="left:1126px;top:436px;width:756px;height:40.7px;background:#e3e6ea;border-radius:8px;"></div>
<div class="a" style="left:1630px;top:396px;width:194px;height:80.7px;background:#fff;border-radius:0px;"></div>
<div class="a" style="left:1630px;top:436px;width:194px;height:1px;background:#e6e9ee;border-radius:0px;"></div>
<svg class="a" style="left:1140px;top:402.8px;" width="24" height="26" viewBox="1140 402.8 24 26"><path d="M1152 404.7L1162.2 410.5V421.1L1152 426.9L1141.8 421.1V410.5ZM1141.8 410.5L1152 415.1L1162.2 410.5M1152 415.1V426.9" fill="none" stroke="#4d5875" stroke-width="1.3" stroke-linejoin="round"/></svg>
<svg class="a" style="left:1140px;top:444.3px;" width="24" height="26" viewBox="1140 444.3 24 26"><path d="M1152 446.2L1162.2 452V462.6L1152 468.4L1141.8 462.6V452ZM1141.8 452L1152 456.6L1162.2 452M1152 456.6V468.4" fill="none" stroke="#6b63ff" stroke-width="1.3" stroke-linejoin="round"/></svg>
<span class="t" style="left:1234.37px;top:406px;line-height:19px;font-size:17.1px;color:#4c5672;transform:scaleX(0.9568);">Cable Assembly</span>
<span class="t" style="left:1234.37px;top:448px;line-height:19px;font-size:17.1px;color:#6c63ff;transform:scaleX(0.9568);">Cable Assembly</span>
<span class="t" style="left:1640.70px;top:406px;line-height:19px;font-size:17.1px;color:#4c5672;transform:scaleX(1.0447);">200</span>
<span class="t" style="left:1640.70px;top:448px;line-height:19px;font-size:17.1px;color:#6c63ff;transform:scaleX(1.0447);">200</span>
<span class="t" style="left:1738.02px;top:406px;line-height:19px;font-size:17.1px;color:#4c5672;transform:scaleX(1.2229);">g</span>
<span class="t" style="left:1738.02px;top:448px;line-height:19px;font-size:17.1px;color:#6c63ff;transform:scaleX(1.2229);">g</span>
<svg class="a" style="left:1828px;top:406.25px;" width="22" height="20" viewBox="1828 406.25 22 20"><path d="M1833 410.75L1844 421.75M1844 410.75L1833 421.75" stroke="#222c44" stroke-width="3.500" stroke-linecap="round"/></svg>
<svg class="a" style="left:1828px;top:447.8px;" width="22" height="20" viewBox="1828 447.8 22 20"><path d="M1833 452.3L1844 463.3M1844 452.3L1833 463.3" stroke="#222c44" stroke-width="3.500" stroke-linecap="round"/></svg>
<div class="a" style="left:0px;top:1059px;width:1918px;height:20px;background:#f9fcff;border-radius:0px;"></div>
<div class="a" style="left:0px;top:1057.7px;width:1918px;height:1.5px;background:#14304d;border-radius:0px;"></div>
<span class="t" style="left:593.66px;top:1060px;line-height:19px;font-size:17px;color:#2a3a52;transform:scaleX(0.9680);">Created by Substantio GmbH |</span>
<span class="t" style="left:822.52px;top:1060px;line-height:19px;font-size:17px;color:#0000ee;transform:scaleX(0.9912);text-decoration:underline;">www.substantio.com</span>
<span class="t" style="left:980.31px;top:1060px;line-height:19px;font-size:17px;color:#2a3a52;transform:scaleX(0.9796);">| connect@substantio.com</span>
<span class="t" style="left:1841.94px;top:1060px;line-height:19px;font-size:17px;color:#2a3a52;transform:scaleX(0.9588);">v3.0.0t11</span>
</div>
</body>
</html>
